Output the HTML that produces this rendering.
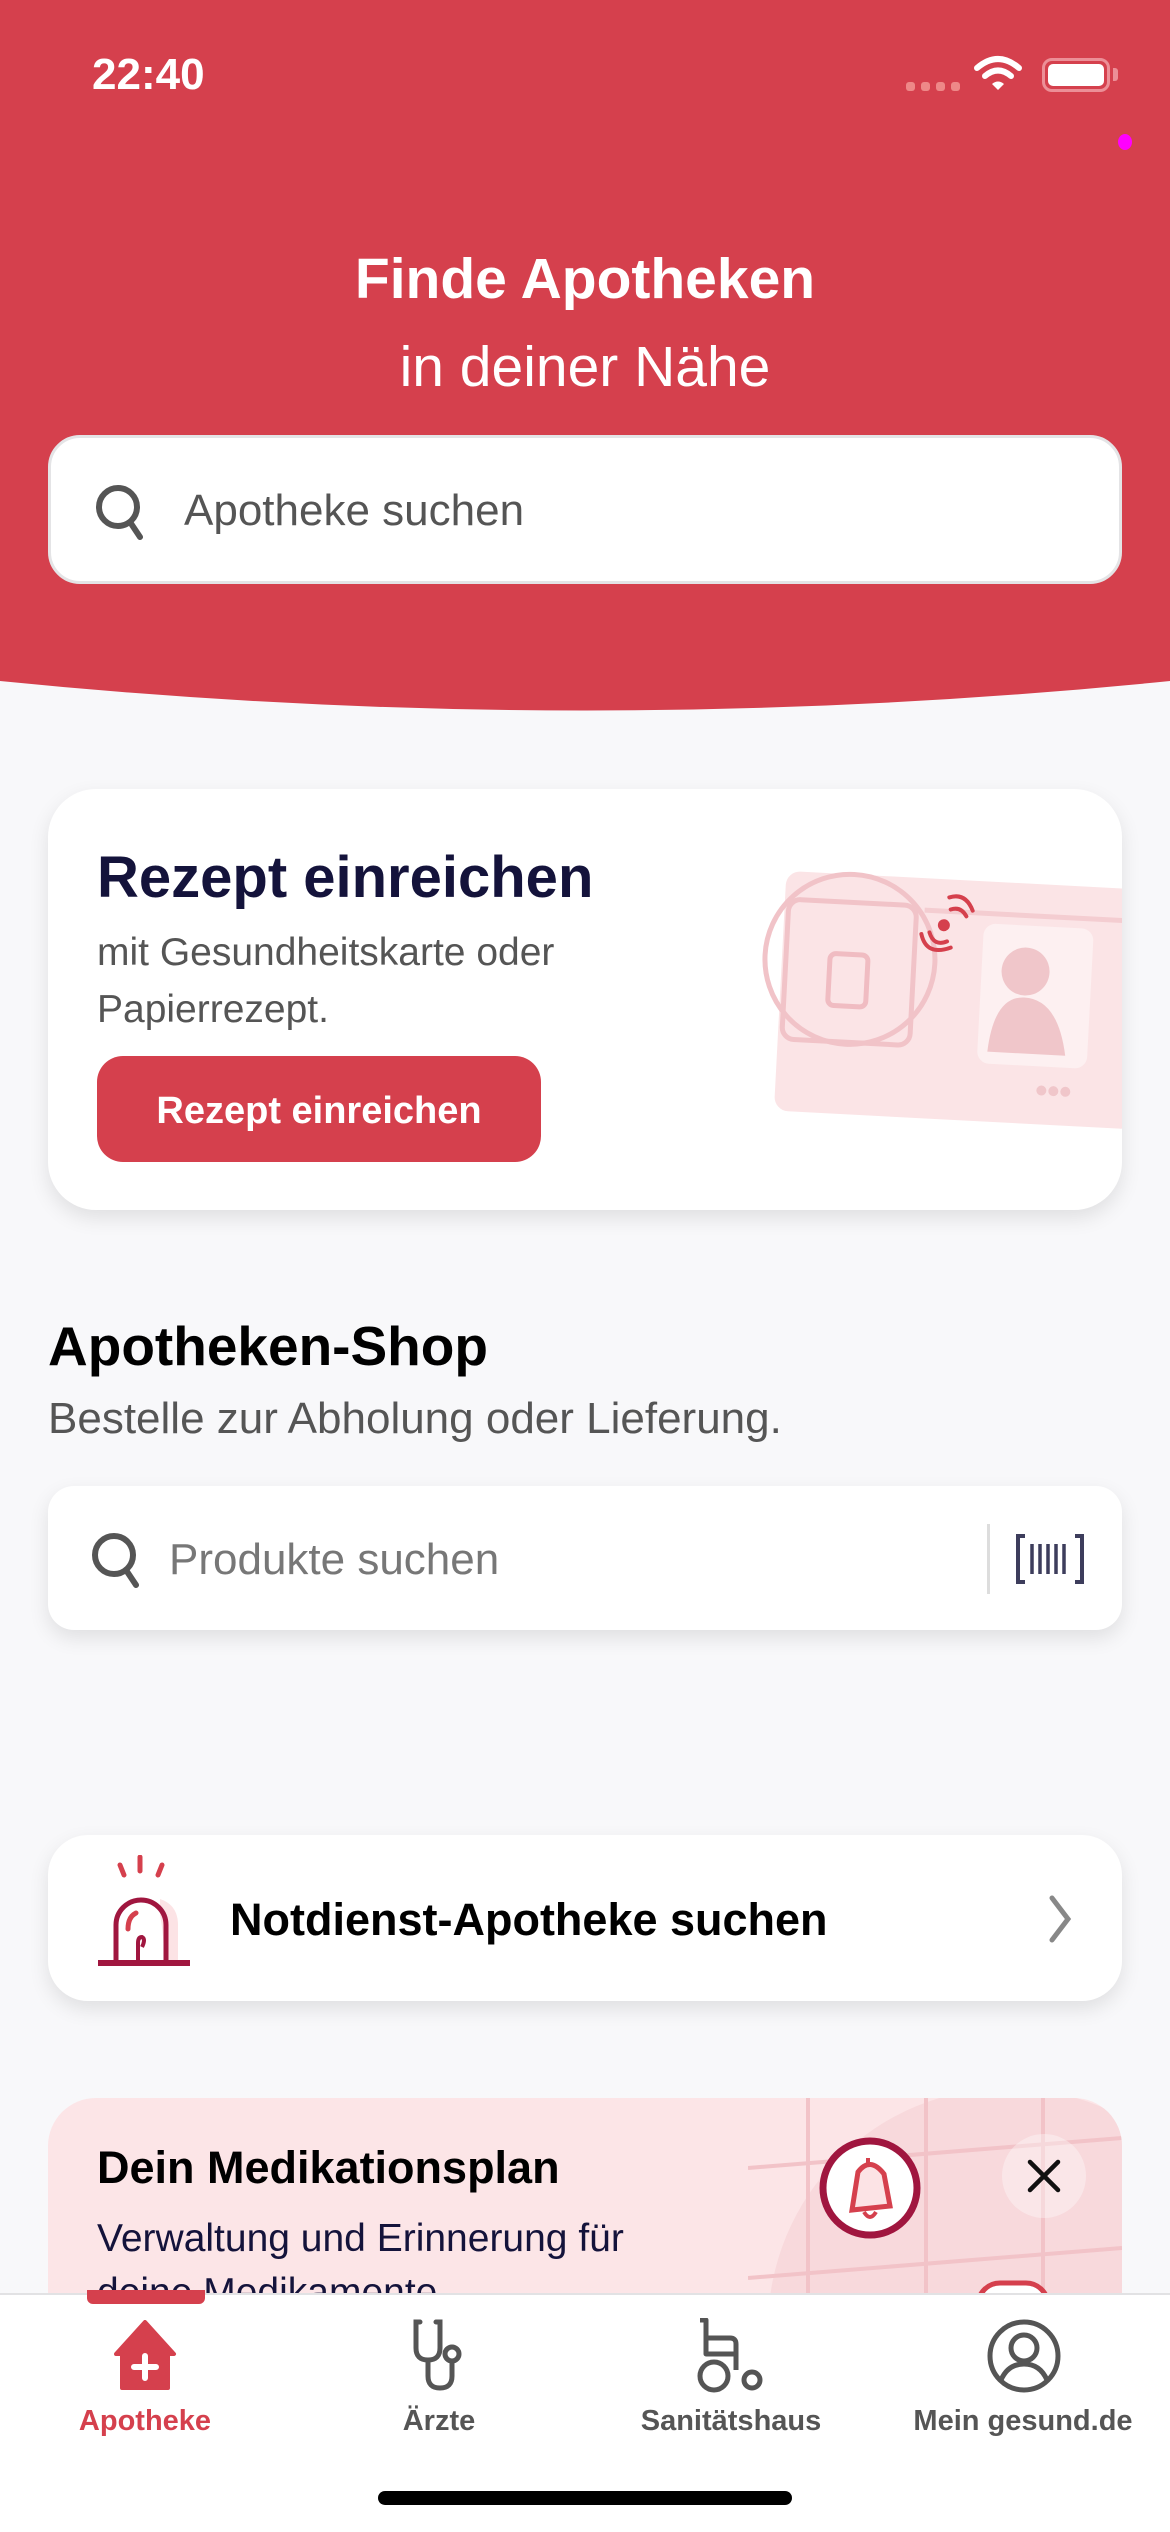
<!DOCTYPE html>
<html><head><meta charset="utf-8">
<style>
*{margin:0;padding:0;box-sizing:border-box}
body{width:1170px;height:2532px;background:#f8f8fa;font-family:"Liberation Sans",sans-serif;position:relative;overflow:hidden}
.a{position:absolute}
.card{position:absolute;background:#fff;box-shadow:0 8px 20px rgba(0,0,0,0.10)}
</style></head><body>
<svg class="a" style="left:0;top:0" width="1170" height="720"><path d="M0 0H1170V681Q585 740 0 681Z" fill="#d5404d"/></svg>
<div class="a" style="left:92px;top:50px;font-size:44px;color:#fff;font-weight:bold">22:40</div>
<div class="a" style="left:906px;top:82px;display:flex;gap:6px"><i style="width:9px;height:9px;border-radius:3px;background:#e88;display:block"></i><i style="width:9px;height:9px;border-radius:3px;background:#e88;display:block"></i><i style="width:9px;height:9px;border-radius:3px;background:#e88;display:block"></i><i style="width:9px;height:9px;border-radius:3px;background:#e88;display:block"></i></div>
<svg class="a" style="left:973px;top:54px" width="50" height="40"><path d="M4 14Q25 -4 46 14" stroke="#fff" stroke-width="6" fill="none" stroke-linecap="round"/><path d="M12 22Q25 11 38 22" stroke="#fff" stroke-width="6" fill="none" stroke-linecap="round"/><path d="M19 30L25 36L31 30Q25 25 19 30Z" fill="#fff"/></svg>
<div class="a" style="left:1042px;top:58px;width:68px;height:34px;border:3px solid #ec8f97;border-radius:10px;padding:3px"><div style="width:100%;height:100%;background:#fff;border-radius:5px"></div></div>
<div class="a" style="left:1113px;top:68px;width:5px;height:13px;background:#ec8f97;border-radius:0 3px 3px 0"></div>
<div class="a" style="left:1118px;top:134px;width:14px;height:16px;border-radius:50%;background:#f0f"></div>
<div class="a" style="left:0;top:246px;width:1170px;text-align:center;color:#fff;font-size:57px;font-weight:bold">Finde Apotheken</div>
<div class="a" style="left:0;top:334px;width:1170px;text-align:center;color:#fff;font-size:57px">in deiner Nähe</div>
<div class="a" style="left:48px;top:435px;width:1074px;height:149px;background:#fff;border:3px solid #e4e4e6;border-radius:32px"></div>
<svg class="a" style="left:94px;top:482px" width="56" height="60"><circle cx="24" cy="25" r="19" stroke="#555" stroke-width="6" fill="none"/><path d="M36 40L46 55" stroke="#555" stroke-width="6" stroke-linecap="round"/></svg>
<div class="a" style="left:184px;top:486px;font-size:44px;color:#555">Apotheke suchen</div>

<div class="card" style="left:48px;top:789px;width:1074px;height:421px;border-radius:48px;overflow:hidden">
<svg class="a" style="left:700px;top:70px" width="380" height="290"><g transform="rotate(3 190 140)"><rect x="32" y="20" width="360" height="240" rx="14" fill="#fbe4e6"/><circle cx="100" cy="105" r="85" stroke="#f1c3c8" stroke-width="5" fill="none"/><rect x="36" y="48" width="128" height="140" rx="12" stroke="#f1c3c8" stroke-width="5" fill="none"/><rect x="80" y="100" width="38" height="52" rx="6" stroke="#f0bcc2" stroke-width="5" fill="none"/><rect x="232" y="62" width="110" height="140" rx="12" fill="#fdf0f1"/><circle cx="276" cy="108" r="24" fill="#f0c6ca"/><path d="M242 190Q246 134 276 134Q310 134 320 190Z" fill="#f0c6ca"/><circle cx="322" cy="226" r="5" fill="#f0c6ca"/><circle cx="310" cy="226" r="5" fill="#f0c6ca"/><circle cx="298" cy="226" r="5" fill="#f0c6ca"/><path d="M172 52L400 52" stroke="#f4cdd1" stroke-width="5"/><circle cx="192" cy="66" r="6" fill="#d5404d"/><path d="M178 74Q183 88 196 82M170 76Q176 98 200 88M214 56Q208 46 198 50M220 50Q212 32 196 38" stroke="#d5404d" stroke-width="4" fill="none" stroke-linecap="round"/></g></svg>
</div>
<div class="a" style="left:97px;top:844px;font-size:58px;font-weight:bold;color:#14133b">Rezept einreichen</div>
<div class="a" style="left:97px;top:924px;font-size:39px;color:#555;line-height:57px">mit Gesundheitskarte oder<br>Papierrezept.</div>
<div class="a" style="left:97px;top:1056px;width:444px;height:106px;background:#d5404d;border-radius:26px;color:#fff;font-size:38px;font-weight:bold;line-height:110px;text-align:center">Rezept einreichen</div>

<div class="a" style="left:48px;top:1314px;font-size:55px;font-weight:bold;color:#000">Apotheken-Shop</div>
<div class="a" style="left:48px;top:1394px;font-size:44px;color:#555">Bestelle zur Abholung oder Lieferung.</div>
<div class="card" style="left:48px;top:1486px;width:1074px;height:144px;border-radius:26px"></div>
<svg class="a" style="left:90px;top:1530px" width="56" height="60"><circle cx="24" cy="25" r="19" stroke="#555" stroke-width="6" fill="none"/><path d="M36 40L46 55" stroke="#555" stroke-width="6" stroke-linecap="round"/></svg>
<div class="a" style="left:169px;top:1535px;font-size:44px;color:#777">Produkte suchen</div>
<div class="a" style="left:987px;top:1524px;width:3px;height:70px;background:#ddd"></div>
<svg class="a" style="left:1015px;top:1534px" width="70" height="50"><path d="M10 2H3V48H10M60 2H67V48H60" stroke="#3d3d5c" stroke-width="4" fill="none"/><path d="M17 10V40M25 10V40M33 10V40M41 10V40M49 10V40" stroke="#3d3d5c" stroke-width="3.5"/></svg>

<div class="card" style="left:48px;top:1835px;width:1074px;height:166px;border-radius:40px"></div>
<svg class="a" style="left:94px;top:1855px" width="100" height="120"><path d="M66 60Q70 80 70 108H84V70Q84 50 66 44Z" fill="#fce3e5"/><path d="M22 108V70A25 25 0 0 1 72 70V108" stroke="#a0163f" stroke-width="5" fill="none"/><path d="M42 58Q34 62 34 74" stroke="#d5404d" stroke-width="5" fill="none" stroke-linecap="round"/><path d="M44 108V88Q44 82 48 82Q52 84 48 92" stroke="#a0163f" stroke-width="4" fill="none"/><path d="M4 108H96" stroke="#a0163f" stroke-width="6"/><path d="M46 2V16M26 10L30 20M68 10L64 20" stroke="#d5404d" stroke-width="5" stroke-linecap="round"/></svg>
<div class="a" style="left:230px;top:1894px;font-size:45px;font-weight:bold;color:#000">Notdienst-Apotheke suchen</div>
<svg class="a" style="left:1046px;top:1894px" width="30" height="50"><path d="M6 4L22 25L6 46" stroke="#888" stroke-width="5" fill="none" stroke-linecap="round"/></svg>

<div class="a" style="left:48px;top:2098px;width:1074px;height:300px;background:#fce5e7;border-radius:48px;overflow:hidden">
<svg class="a" style="left:700px;top:0" width="374" height="300"><ellipse cx="260" cy="230" rx="240" ry="240" fill="#f8d9dc"/><path d="M60 0V300M178 0V300M295 0V300M0 70L374 40M0 180L374 150" stroke="#f2c3c8" stroke-width="4"/><circle cx="122" cy="90" r="47" fill="#fff" stroke="#a0163f" stroke-width="7"/><path d="M104 112L110 74Q122 58 136 76L142 108Z" fill="#fce3e5" stroke="#d5404d" stroke-width="5"/><path d="M120 66V60M116 114Q122 124 128 114" stroke="#d5404d" stroke-width="4" fill="none"/><path d="M60 240L130 210Q160 210 165 240" stroke="#a0163f" stroke-width="8" fill="#d5404d"/><rect x="230" y="185" width="70" height="50" rx="22" fill="#fff" stroke="#d5404d" stroke-width="5"/></svg>
</div>
<div class="a" style="left:1002px;top:2134px;width:84px;height:84px;border-radius:50%;background:rgba(255,255,255,0.35)"></div>
<svg class="a" style="left:1026px;top:2158px" width="36" height="36"><path d="M4 4L32 32M32 4L4 32" stroke="#111" stroke-width="4.5" stroke-linecap="round"/></svg>
<div class="a" style="left:97px;top:2142px;font-size:45px;font-weight:bold;color:#000">Dein Medikationsplan</div>
<div class="a" style="left:97px;top:2212px;font-size:39px;color:#14133b;line-height:54px">Verwaltung und Erinnerung für<br>deine Medikamente</div>

<div class="a" style="left:0;top:2293px;width:1170px;height:239px;background:#fff;border-top:2px solid #e2e2e4"></div>
<div class="a" style="left:87px;top:2290px;width:118px;height:14px;background:#d5404d;border-radius:0 0 6px 6px"></div>
<svg class="a" style="left:110px;top:2320px" width="70" height="72"><path d="M35 2L64 34H58V68H12V34H6Z" fill="#d5404d" stroke="#d5404d" stroke-width="4" stroke-linejoin="round"/><path d="M35 36V58M24 47H46" stroke="#fff" stroke-width="6" stroke-linecap="round"/></svg>
<svg class="a" style="left:402px;top:2318px" width="72" height="76"><path d="M18 4H14V30Q14 42 26 42Q38 42 38 30V4H34" stroke="#555" stroke-width="5" fill="none" stroke-linecap="round"/><path d="M26 42V58Q26 70 38 70Q50 70 50 58V44" stroke="#555" stroke-width="5" fill="none"/><circle cx="50" cy="36" r="7" stroke="#555" stroke-width="5" fill="none"/></svg>
<svg class="a" style="left:694px;top:2318px" width="74" height="76"><path d="M6 2H12V36H42V52" stroke="#555" stroke-width="5" fill="none" stroke-linejoin="round"/><path d="M12 20H36Q42 20 42 26V36" stroke="#555" stroke-width="5" fill="none"/><circle cx="20" cy="58" r="14" stroke="#555" stroke-width="5" fill="none"/><circle cx="58" cy="62" r="8" stroke="#555" stroke-width="5" fill="none"/></svg>
<svg class="a" style="left:986px;top:2318px" width="76" height="76"><circle cx="38" cy="38" r="34" stroke="#555" stroke-width="5" fill="none"/><circle cx="38" cy="30" r="13" stroke="#555" stroke-width="5" fill="none"/><path d="M15 62Q22 46 38 46Q54 46 61 62" stroke="#555" stroke-width="5" fill="none"/></svg>
<div class="a" style="left:45px;top:2405px;width:200px;text-align:center;font-size:29px;font-weight:bold;color:#d5404d">Apotheke</div>
<div class="a" style="left:339px;top:2405px;width:200px;text-align:center;font-size:29px;font-weight:bold;color:#555">Ärzte</div>
<div class="a" style="left:611px;top:2405px;width:240px;text-align:center;font-size:29px;font-weight:bold;color:#555">Sanitätshaus</div>
<div class="a" style="left:893px;top:2405px;width:260px;text-align:center;font-size:29px;font-weight:bold;color:#555">Mein gesund.de</div>
<div class="a" style="left:378px;top:2491px;width:414px;height:14px;background:#000;border-radius:7px"></div>
</body></html>
